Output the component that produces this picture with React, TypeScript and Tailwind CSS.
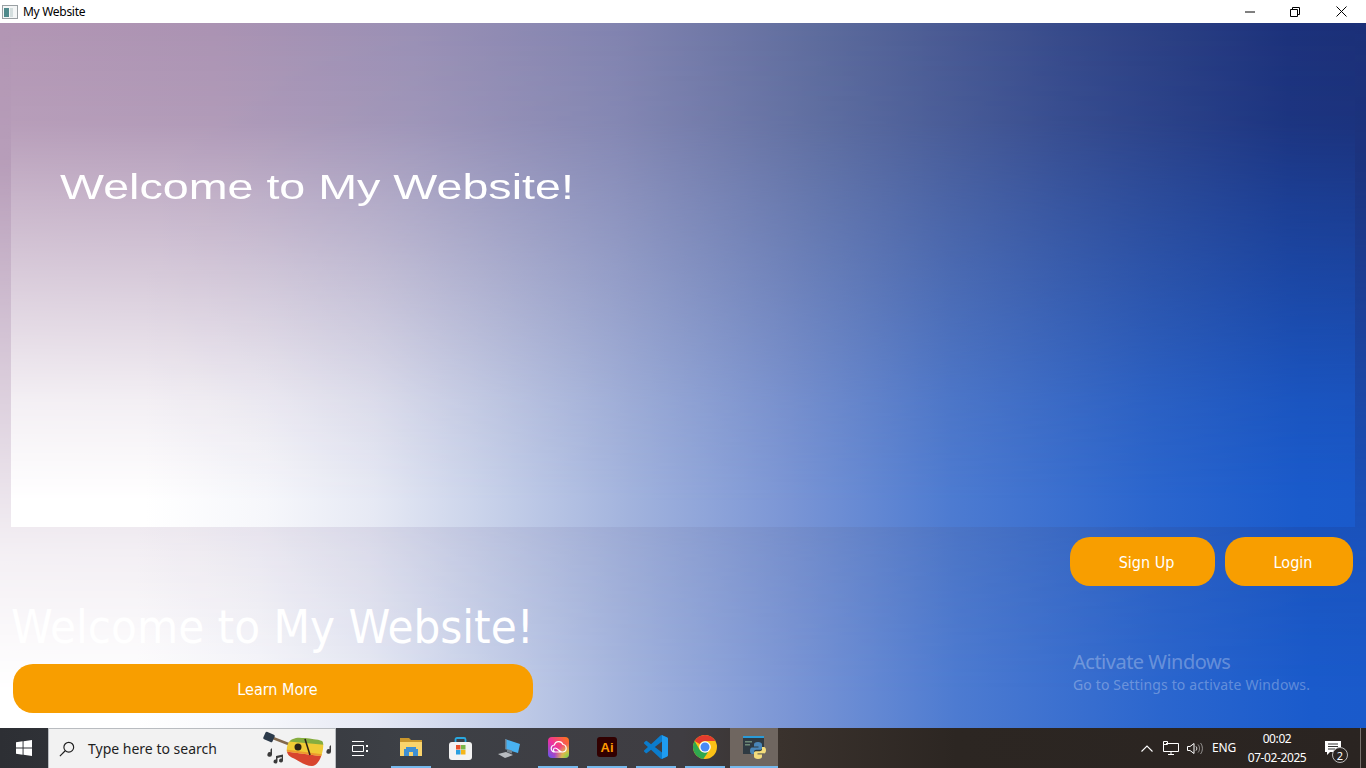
import type { ReactNode } from 'react'

// same fade on the window and on the inner panel, top edge colours on the element, bottom edge on ::before
const fade =
  "relative bg-[linear-gradient(90deg,#b296b4_0%,#ab93b3_15%,#9a90b5_30%,#8284b0_45%,#5e6c9d_60%,#384b8b_78%,#1d327b_95%,#1c3078_100%)] before:absolute before:inset-0 before:bg-[linear-gradient(90deg,#ffffff_0%,#ffffff_10%,#f6f7fb_19%,#e6e9f4_27%,#c6d0e9_36%,#a2b3dd_46%,#7a95d5_58%,#4d7bd1_70%,#2b66ce_85%,#1a5bcc_96%,#1a5acb_100%)] before:[mask-image:linear-gradient(to_bottom,rgba(0,0,0,0)_0%,rgba(0,0,0,0.08)_20%,rgba(0,0,0,0.3)_35%,rgba(0,0,0,0.58)_55%,rgba(0,0,0,0.85)_75%,rgba(0,0,0,1)_95%)]"

function Underlined({ children }: { children: ReactNode }) {
  return (
    <div className="flex h-10 w-10 items-center justify-center border-b-2 border-[#76b9ed]">
      {children}
    </div>
  )
}

function PlainSlot({ children }: { children: ReactNode }) {
  return <div className="flex h-10 w-10 items-center justify-center">{children}</div>
}

function FolderIcon() {
  return (
    <svg width="22" height="18" viewBox="0 0 22 18">
      <path d="M0 0h9l2 2h11v16H0z" fill="#c9962c" />
      <path d="M0 4h22v14H0z" fill="#fad46c" />
      <path d="M6 9h10v2h2v7h-5v-4H9v4H4v-7h2z" fill="#3f8fd2" />
    </svg>
  )
}

function StoreIcon() {
  return (
    <svg width="23" height="23" viewBox="0 0 23 23">
      <path d="M6.500 7V2.500A1.500 1.500 0 0 1 8 1h7a1.500 1.500 0 0 1 1.500 1.500V7" fill="none" stroke="#29a8e0" strokeWidth="1.800" />
      <rect x="0" y="5" width="23" height="18" rx="3" fill="#f3f3f3" />
      <rect x="7" y="8" width="4.500" height="4.500" fill="#e8512a" />
      <rect x="12" y="8" width="4.500" height="4.500" fill="#7ab648" />
      <rect x="7" y="13" width="4.500" height="4.500" fill="#2a9fe0" />
      <rect x="12" y="13" width="4.500" height="4.500" fill="#f5b61a" />
    </svg>
  )
}

function ThisPcIcon() {
  return (
    <svg width="22" height="21" viewBox="0 0 22 21">
      <path d="M7 1l15 5-2 9-13-4z" fill="#49b2f2" />
      <path d="M7 1l1.500 .5V11.500L7 11z" fill="#6f7b86" />
      <path d="M9 11l5 1.500v3l-5-1.500z" fill="#77818a" />
      <path d="M0 16l8-2 7 3-8 3z" fill="#b9bcc0" />
    </svg>
  )
}

function CreativeCloudIcon() {
  return (
    <svg width="21" height="21" viewBox="0 0 21 21">
      <defs>
        <linearGradient id="cc" x1="0" y1="1" x2="1" y2="0">
          <stop offset="0" stopColor="#5a5cf2" />
          <stop offset="0.45" stopColor="#ee2fa0" />
          <stop offset="1" stopColor="#ff7a10" />
        </linearGradient>
        <radialGradient id="ccg" cx="1" cy="1" r="0.7">
          <stop offset="0" stopColor="#4fdc4a" />
          <stop offset="0.5" stopColor="#d9d93a" stopOpacity="0.8" />
          <stop offset="1" stopColor="#d9d93a" stopOpacity="0" />
        </radialGradient>
      </defs>
      <rect width="21" height="21" rx="4" fill="url(#cc)" />
      <rect width="21" height="21" rx="4" fill="url(#ccg)" />
      <path
        d="M7 15a3.500 3.500 0 0 1-.6-7A4.500 4.500 0 0 1 15 7.500 3.800 3.800 0 0 1 15 15zM7 15c-2 0-2-4 0-4 3 0 4 4 7 4"
        fill="none"
        stroke="#fff"
        strokeWidth="1.200"
      />
    </svg>
  )
}

function IllustratorIcon() {
  return (
    <div className="flex h-[20px] w-[20px] items-center justify-center rounded-[3px] bg-[#310000] font-['Liberation_Sans',sans-serif] text-[13px] leading-none font-bold text-[#ff9a00]">
      Ai
    </div>
  )
}

function VsCodeIcon() {
  return (
    <svg width="24" height="24" viewBox="0 0 24 24">
      <path
        d="M23.150 2.587L18.210.21a1.494 1.494 0 0 0-1.705.29l-9.460 8.630-4.120-3.128a.999.999 0 0 0-1.276.057L.327 7.261A1 1 0 0 0 .326 8.740L3.899 12 .326 15.260a1 1 0 0 0 .001 1.479L1.650 17.940a.999.999 0 0 0 1.276.057l4.120-3.128 9.460 8.630a1.492 1.492 0 0 0 1.704.29l4.942-2.377A1.500 1.500 0 0 0 24 20.060V3.939a1.500 1.500 0 0 0-.850-1.352zm-5.146 14.861L10.826 12l7.178-5.448v10.896z"
        fill="#0b7ccc"
      />
      <path
        d="M23.150 2.587L18.210.21A1.494 1.494 0 0 0 18 .1V6.552v10.896V23.900a1.500 1.500 0 0 0 .2-.1l4.950-2.390A1.500 1.500 0 0 0 24 20.060V3.939a1.500 1.500 0 0 0-.850-1.352z"
        fill="#1f9cf0"
      />
    </svg>
  )
}

function ChromeIcon() {
  return (
    <svg width="24" height="24" viewBox="0 0 24 24">
      <circle cx="12" cy="12" r="12" fill="#fbc116" />
      <path d="M1.600 6A12 12 0 0 0 10.300 23.900L15 17.200 9 17 6.800 15z" fill="#2fa84f" />
      <path d="M12 0A12 12 0 0 1 22.400 6H12A6 6 0 0 0 6.800 9L1.600 6A12 12 0 0 1 12 0z" fill="#e33b2e" />
      <circle cx="12" cy="12" r="5.800" fill="#fff" />
      <circle cx="12" cy="12" r="4.500" fill="#4a8af4" />
    </svg>
  )
}

function PythonAppIcon() {
  const snake =
    'M8 0C5 0 4 1 4 2.500V4.500H8.500V5.500H2C.7 5.500 0 7 0 8.700S.7 12 2 12H4V9.800C4 8.600 5 7.800 6.200 7.800H10.200C11.300 7.800 12 7 12 6V2.500C12 1 10.500 0 8 0z'
  return (
    <svg width="23" height="23" viewBox="0 0 23 23">
      <rect x="0" y="0" width="21" height="18" fill="#2f3a42" />
      <rect x="0" y="0" width="21" height="2" fill="#2a9bd8" />
      <rect x="2" y="5" width="7" height="1.500" fill="#6f8a78" />
      <rect x="2" y="8" width="5" height="1.500" fill="#6f8a78" />
      <g transform="translate(7 6)">
        <path d={snake} fill="#4a86b8" />
        <path d={snake} fill="#f4dc7c" transform="rotate(180 8 8.500)" />
      </g>
    </svg>
  )
}

function GuitarDoodle() {
  return (
    <svg width="72" height="36" viewBox="0 0 72 36">
      <defs>
        <clipPath id="guitar-body">
          <path d="M24 21C23 15 26 9 30 8 34 6 38 7 42 7 48 8 54 8 59 10 61 12 60 16 60 18 59 23 58 26 57 28 55 32 52 35 49 35 43 35 37 31 32 28 28 26 25 25 24 21z" />
        </clipPath>
      </defs>
      <path d="M10 7L33 16" stroke="#84694c" strokeWidth="2.500" />
      <rect x="1" y="2" width="10" height="8" rx="1.500" fill="#2c3a4a" transform="rotate(25 6 6)" />
      <g clipPath="url(#guitar-body)">
        <rect x="20" y="4" width="44" height="10" fill="#86ad3f" />
        <path d="M20 10l44 4v12L20 20z" fill="#f0cb35" />
        <path d="M20 20l44 6v12H20z" fill="#d8452e" />
        <path d="M20 18l44 6v2L20 20z" fill="#ee9a2e" />
      </g>
      <circle cx="35" cy="16" r="3.500" fill="#2a2118" />
      <path d="M42 8l5 16" stroke="#2a2118" strokeWidth="1.600" />
      <path d="M9 17v6.500a2.300 2.300 0 1 1-1.500-2.200V18.500z" fill="#3a3a3a" />
      <path d="M13 25l7-1.500v6a2 2 0 1 1-1.300-1.900V26l-4.200.9v3.600a2 2 0 1 1-1.500-1.900z" fill="#3a3a3a" />
      <path d="M68 14v6.500a2.300 2.300 0 1 1-1.500-2.200V15.500z" fill="#3a3a3a" />
    </svg>
  )
}

function App() {
  return (
    <div className="flex h-screen w-screen flex-col overflow-hidden bg-white font-['Noto_Sans',sans-serif]">
      {/* title bar */}
      <header className="flex h-[23px] shrink-0 items-center bg-white pr-[2px] pl-[2px]">
        <svg width="16" height="16" viewBox="0 0 16 16" className="mr-[5px]">
          <rect x="0.500" y="1.500" width="15" height="13" fill="#f4f6f6" stroke="#9aa0a3" />
          <rect x="2" y="4" width="5" height="9" fill="#4f8a8b" />
          <rect x="8" y="4" width="3" height="9" fill="#d4dede" />
        </svg>
        <span className="text-xs tracking-[-0.3px] text-black">My Website</span>
        <div className="ml-auto flex h-full items-center">
          <div className="flex h-full w-[46px] items-center justify-center pl-[1px]">
            <svg width="10" height="10" viewBox="0 0 10 10">
              <path d="M0 5h10" stroke="#000" />
            </svg>
          </div>
          <div className="flex h-full w-[46px] items-center justify-center">
            <svg width="10" height="10" viewBox="0 0 10 10" fill="none" stroke="#000">
              <path d="M.5 2.500h7v7h-7zM2.500 2.500v-2h7v7h-2" />
            </svg>
          </div>
          <div className="flex h-full w-[46px] items-center justify-center">
            <svg width="11" height="11" viewBox="0 0 11 11" stroke="#000">
              <path d="M.5 .5l10 10M10.500 .5l-10 10" />
            </svg>
          </div>
        </div>
      </header>

      {/* window body */}
      <main className={`${fade} flex flex-1 flex-col px-[11px]`}>
        <section className={`${fade} z-10 h-[504px] shrink-0`}>
          <h1 className="relative z-10 mt-[142px] ml-[49px] w-max origin-left scale-x-[1.332] font-['Liberation_Sans',sans-serif] text-[35px] leading-[44px] font-normal text-white">
            Welcome to My Website!
          </h1>
        </section>
        <div className="relative z-10 flex flex-1 justify-between font-['DejaVu_Sans_Condensed','Noto_Sans',sans-serif]">
          <div className="flex w-[522px] flex-col pt-[70px]">
            <h2 className="text-[47px] leading-[60px] whitespace-nowrap text-white">
              Welcome to My Website!
            </h2>
            <button className="mt-[7px] ml-[2px] h-[49px] w-[520px] rounded-[20px] bg-[#f89e00] pt-[2px] pl-[9px] text-base text-white">
              Learn More
            </button>
          </div>
          <div className="mt-[10px] flex gap-[10px] pr-[2px]">
            <button className="h-[49px] w-[145px] rounded-[20px] bg-[#f89e00] pt-[2px] pl-[8px] text-base text-white">
              Sign Up
            </button>
            <button className="h-[49px] w-[128px] rounded-[20px] bg-[#f89e00] pt-[2px] pl-[8px] text-base text-white">
              Login
            </button>
          </div>
        </div>
        {/* watermark sits on top of the app */}
        <div className="absolute top-[625px] left-[1073px] z-20 text-white/30">
          <div className="text-xl leading-[27px] tracking-[-0.5px]">Activate Windows</div>
          <div className="text-sm leading-[19px] tracking-[0.15px]">Go to Settings to activate Windows.</div>
        </div>
      </main>

      {/* taskbar */}
      <footer className="flex h-10 shrink-0 items-center bg-[linear-gradient(90deg,#2d2f34_0%,#3d4046_30%,#3f3d42_50%,#3a322d_57%,#2c2622_70%,#2a2421_100%)] text-white">
        <div className="flex h-10 w-12 items-center justify-center">
          <svg width="16" height="16" viewBox="0 0 17 17" fill="#fff">
            <path d="M0 2.400l7-1v6.700H0zM8 1.300L17 0v8.100H8zM0 9h7v6.700l-7-1zM8 9h9v8l-9-1.300z" />
          </svg>
        </div>
        <div className="flex h-10 w-[288px] items-center border border-b-0 border-[#b9bcc0] bg-[#f2f2f2] pl-[10px] text-[#1f1f1f]">
          <svg width="16" height="16" viewBox="0 0 18 18" fill="none" stroke="#1f1f1f" strokeWidth="1.300">
            <circle cx="11" cy="7" r="5.500" />
            <path d="M7 11l-6 6" />
          </svg>
          <span className="ml-[13px] text-sm">Type here to search</span>
          <div className="ml-auto">
            <GuitarDoodle />
          </div>
        </div>
        <div className="flex h-10 w-12 items-center justify-center">
          <svg width="16" height="15" viewBox="0 0 16 15" fill="none" stroke="#fff">
            <path d="M0 .5h12M0 14.500h12M.5 4.500h11v6H.5z" />
            <path d="M14 4h2v2h-2zM14 9h2v2h-2z" fill="#fff" stroke="none" />
          </svg>
        </div>
        <div className="ml-[7px] flex items-center gap-[9px]">
          <Underlined>
            <FolderIcon />
          </Underlined>
          <PlainSlot>
            <StoreIcon />
          </PlainSlot>
          <PlainSlot>
            <ThisPcIcon />
          </PlainSlot>
          <Underlined>
            <CreativeCloudIcon />
          </Underlined>
          <Underlined>
            <IllustratorIcon />
          </Underlined>
          <Underlined>
            <VsCodeIcon />
          </Underlined>
          <Underlined>
            <ChromeIcon />
          </Underlined>
        </div>
        <div className="ml-[5px] flex h-10 w-[48px] items-center justify-center border-b-2 border-[#76b9ed] bg-[#6f6660]">
          <PythonAppIcon />
        </div>

        <div className="ml-auto flex h-10 items-center text-xs">
          <svg width="12" height="7" viewBox="0 0 12 7" fill="none" stroke="#fff" strokeWidth="1.100" className="mr-[10px]">
            <path d="M.5 6.500L6 1l5.500 5.500" />
          </svg>
          <svg width="16" height="15" viewBox="0 0 16 15" fill="none" stroke="#fff" className="mr-[8px]">
            <path d="M3 2.500h12.500v8H.5V.5h4v3h-4M5 13.500h6M8 10.500v3" />
          </svg>
          <svg width="16" height="13" viewBox="0 0 16 13" fill="none" stroke="#fff" className="mr-[9px]">
            <path d="M.5 4.500h2.500L7 1.500v10L3 8.500H.5z" />
            <path d="M9 4.500c1 1 1 3 0 4" />
            <path d="M11 2.500c2 2 2 6 0 8M13.500 1c2.500 3 2.500 8 0 11" opacity="0.500" />
          </svg>
          <span className="mr-[7px] tracking-[-0.2px]">ENG</span>
          <div className="flex w-[68px] flex-col items-center leading-[19px] tracking-[-0.4px]">
            <span>00:02</span>
            <span>07-02-2025</span>
          </div>
          <div className="relative ml-[14px] flex h-10 w-[28px] items-start pt-[13px]">
            <svg width="16" height="14" viewBox="0 0 16 14" fill="#fff">
              <path d="M0 0h16v11H5l-3 3v-3H0z" />
              <path d="M3 3h10M3 5.500h10M3 8h7" stroke="#333" />
            </svg>
            {/* notification count */}
            <div className="absolute top-[19px] left-[7px] flex h-[16px] w-[16px] items-center justify-center rounded-full border border-[#bbb] bg-[#2a2421] text-[11px] leading-none">
              2
            </div>
          </div>
          <div className="ml-[7px] h-10 w-[6px] border-l border-[#77716d]" />
        </div>
      </footer>
    </div>
  )
}

export default App
